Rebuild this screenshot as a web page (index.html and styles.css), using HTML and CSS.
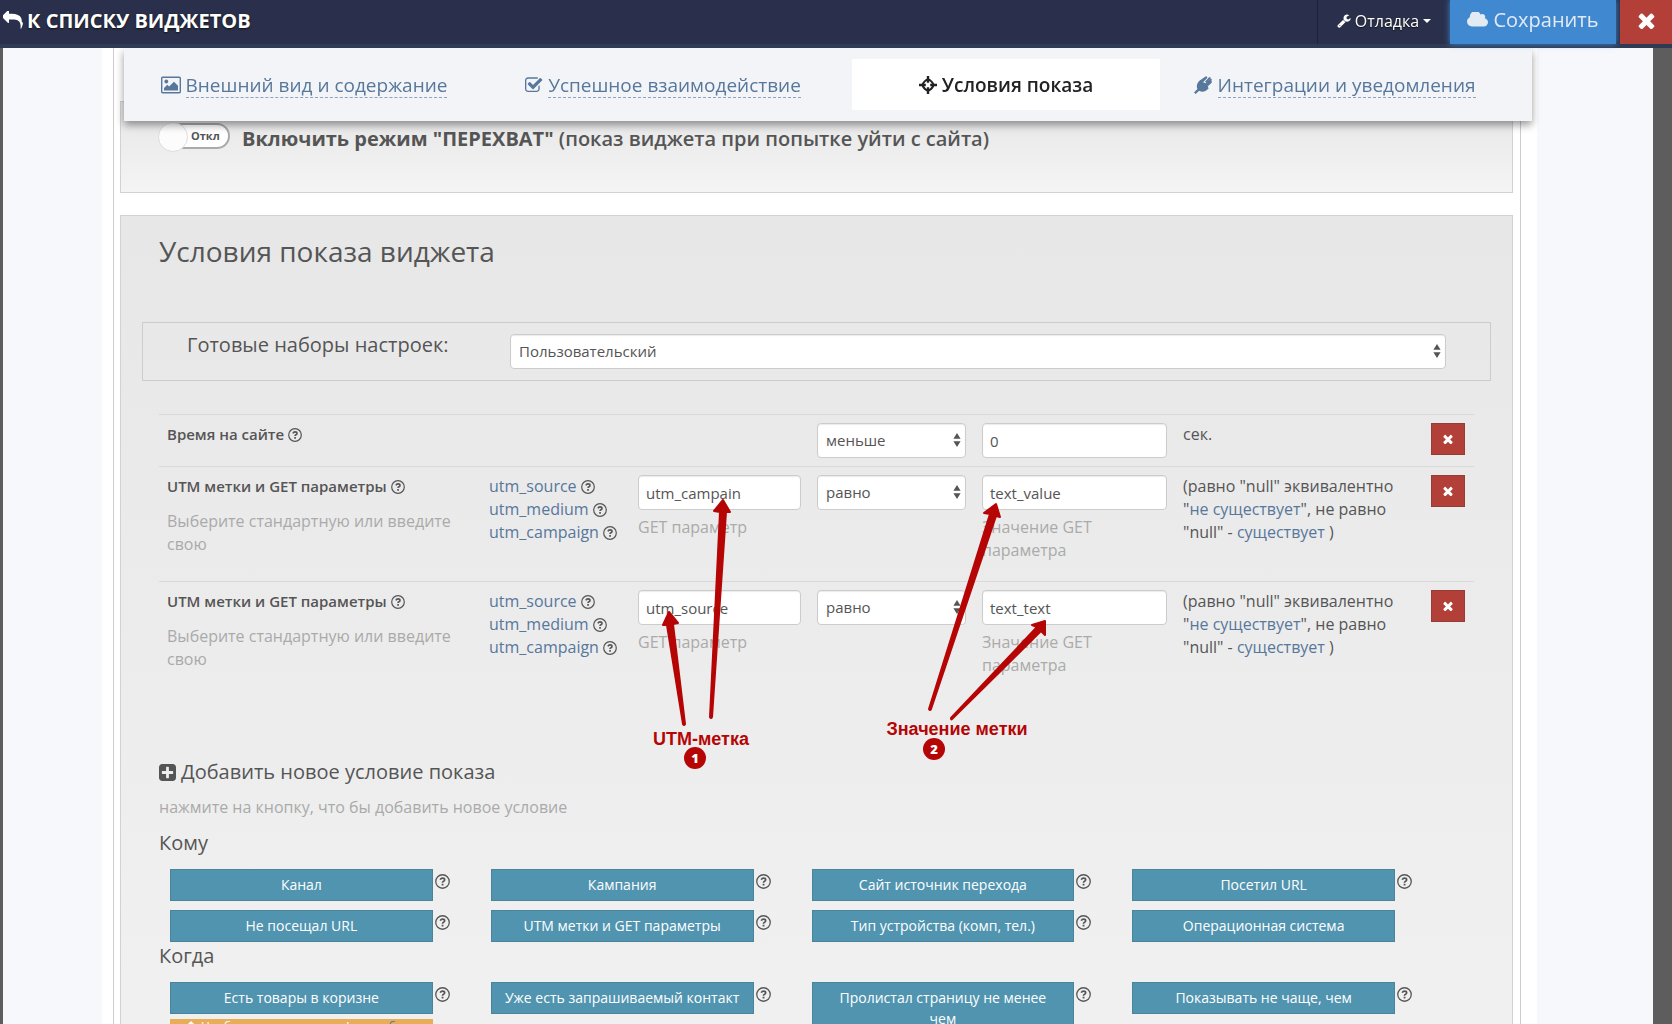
FILE: index.html
```html
<!DOCTYPE html>
<html lang="ru">
<head>
<meta charset="utf-8">
<title>Условия показа виджета</title>
<link rel="stylesheet" href="styles.css">
</head>
<body>
<svg class="sprite" aria-hidden="true">
  <symbol id="i-reply" viewBox="0 96 1792 1664"><path d="M1792 1120q0 166-127 451-3 7-10.500 24t-13.500 30-13 22q-12 17-28 17-15 0-23.500-10t-8.500-25q0-9 2.500-26.500t2.500-23.500q5-68 5-123 0-112-19.500-200.500t-54-153.500-89-112-119.500-78.500-152-46.500-177-20.500-204-5.500h-224v256q0 26-19 45t-45 19-45-19l-512-512q-19-19-19-45t19-45l512-512q19-19 45-19t45 19 19 45v256h224q713 0 875 403 53 134 53 333z"/></symbol>
  <symbol id="i-times" viewBox="256 256 1280 1280"><path d="M1490 1322q0 40-28 68l-136 136q-28 28-68 28t-68-28l-294-294-294 294q-28 28-68 28t-68-28l-136-136q-28-28-28-68t28-68l294-294-294-294q-28-28-28-68t28-68l136-136q28-28 68-28t68 28l294 294 294-294q28-28 68-28t68 28l136 136q28 28 28 68t-28 68l-294 294 294 294q28 28 28 68z"/></symbol>
  <symbol id="i-cloud" viewBox="64 256 1920 1280"><path d="M1984 1152q0 159-112.500 271.500t-271.500 112.500h-1088q-185 0-316.500-131.500t-131.500-316.500q0-132 71-241.500t187-163.500q-2-28-2-43 0-212 150-362t362-150q158 0 286.500 88t187.500 230q70-62 166-62 106 0 181 75t75 181q0 75-41 138 129 30 213 134.500t84 239.500z"/></symbol>
  <symbol id="i-wrench" viewBox="64 64 1664 1728"><path d="M448 1472q0-26-19-45t-45-19-45 19-19 45 19 45 45 19 45-19 19-45zm644-420l-682 682q-37 37-90 37-52 0-91-37l-106-108q-38-36-38-90 0-53 38-91l681-681q39 98 114.500 173.500t173.500 114.500zm634-435q0 39-23 106-47 134-164.500 217.500t-258.500 83.500q-185 0-316.500-131.500t-131.500-316.500 131.500-316.500 316.500-131.500q58 0 121.500 16.500t107.500 46.500q16 11 16 28t-16 28l-293 169v224l193 107q5-3 79-48.500t135.500-81 70.500-35.500q15 0 23.500 10t8.500 25z"/></symbol>
  <symbol id="i-plus" viewBox="128 128 1536 1536"><path d="M1408 960v-128q0-26-19-45t-45-19h-320v-320q0-26-19-45t-45-19h-128q-26 0-45 19t-19 45v320h-320q-26 0-45 19t-19 45v128q0 26 19 45t45 19h320v320q0 26 19 45t45 19h128q26 0 45-19t19-45v-320h320q26 0 45-19t19-45zm256-544v960q0 119-84.500 203.500t-203.500 84.500h-960q-119 0-203.500-84.500t-84.500-203.500v-960q0-119 84.500-203.500t203.500-84.500h960q119 0 203.500 84.500t84.500 203.500z"/></symbol>
  <symbol id="i-check" viewBox="64 64 1728 1600"><path d="M1472 930v318q0 119-84.500 203.500t-203.500 84.500h-832q-119 0-203.500-84.500t-84.500-203.500v-832q0-119 84.500-203.500t203.500-84.500h832q63 0 117 25 15 7 18 23 3 17-9 29l-49 49q-10 10-23 10-3 0-9-2-23-6-45-6h-832q-66 0-113 47t-47 113v832q0 66 47 113t113 47h832q66 0 113-47t47-113v-254q0-13 9-22l64-64q10-10 23-10 6 0 12 3 20 8 20 29zm231-489l-814 814q-24 24-57 24t-57-24l-430-430q-24-24-24-57t24-57l110-110q24-24 57-24t57 24l263 263 647-647q24-24 57-24t57 24l110 110q24 24 24 57t-24 57z"/></symbol>
  <symbol id="i-image" viewBox="0 0 20 17"><path fill="none" stroke="currentColor" stroke-width="1.400" d="M1.700.7h16.600q1 0 1 1v13.600q0 1-1 1H1.700q-1 0-1-1V1.700q0-1 1-1z"/><circle cx="5.300" cy="5" r="1.900"/><path d="M3 14v-2.500l3.300-3.200 1.800 1.800L13 5.200l4 4V14z"/></symbol>
  <symbol id="i-target" viewBox="0 0 18 18"><path d="M9 3.200q3.800 1.500 5.800 5.800-2 4.300-5.800 5.800Q5.200 13.300 3.200 9 5.200 4.700 9 3.200z" fill="none" stroke="currentColor" stroke-width="1.900"/><path d="M7.800 0h2.400v6.800H7.800zM7.800 11.200h2.400V18H7.800zM0 7.800h6.800v2.400H0zM11.200 7.800H18v2.400h-6.800z"/></symbol>
  <symbol id="i-plug" viewBox="0 0 20 20"><path d="M12.200 6.300L16.500 1.700q1-.9 1.800-.1t-.1 1.800L14 7.800zM13.800 9.800l1.700 1.600 4-4q.9-1 .1-1.700t-1.700.1zM5 6.300L7 4.500l9.300 9.200-1.900 1.900q-4 3.200-8.700.9L1.800 20 0 18.200l3.800-3.700Q2 10 5 6.300z"/><path d="M6.500 5L12.400.8q1.200-.9 2 0t-.2 2L10 7l3 1 5-4.500q1-.7 1.600 0t-.2 1.600L15 10l1 3.700-3 .3z"/></symbol>
  <symbol id="i-help" viewBox="0 0 14 14"><circle cx="7" cy="7" r="6.300" fill="none" stroke="currentColor" stroke-width="1.200"/><path d="M4.900 5.400Q5.500 3.900 7 3.900q2 0 2 1.500 0 .9-1 1.400-1 .5-1 1.300" fill="none" stroke="currentColor" stroke-width="1.600"/><path d="M6.200 9.100h1.700v1.600H6.200z"/></symbol>
  <symbol id="i-sort" viewBox="0 0 8 14"><path d="M4 0l3.600 5.700H.4zM4 14l3.600-5.700H.4z"/></symbol>
  <symbol id="i-up" viewBox="0 0 12 12"><path d="M6 0l6 6-1 1H8v5H4V7H1L0 6z"/></symbol>
</svg>

<header class="topbar">
  <a class="back" href="#"><svg class="icon icon-reply"><use href="#i-reply"/></svg>К СПИСКУ ВИДЖЕТОВ</a>
  <button class="debug" type="button"><svg class="icon icon-wrench"><use href="#i-wrench"/></svg>Отладка<span class="caret"></span></button>
  <button class="save" type="button"><svg class="icon icon-cloud"><use href="#i-cloud"/></svg>Сохранить</button>
  <button class="close" type="button" aria-label="Закрыть"><svg class="icon icon-close"><use href="#i-times"/></svg></button>
</header>

<main class="modal">
  <div class="sheet">
    <div class="frame">
      <nav class="tabs">
        <a class="tab" href="#"><svg class="icon icon-tab"><use href="#i-image"/></svg><span class="tab-text">Внешний вид и содержание</span></a>
        <a class="tab" href="#"><svg class="icon icon-tab-small"><use href="#i-check"/></svg><span class="tab-text">Успешное взаимодействие</span></a>
        <a class="tab tab-active" href="#"><svg class="icon icon-tab-small"><use href="#i-target"/></svg><span class="tab-text">Условия показа</span></a>
        <a class="tab" href="#"><svg class="icon icon-tab"><use href="#i-plug"/></svg><span class="tab-text">Интеграции и уведомления</span></a>
      </nav>

      <section class="panel panel-capture">
        <label class="capture"><input class="switch-input" type="checkbox"><span class="switch">Откл</span><span class="capture-text"><strong>Включить режим "ПЕРЕХВАТ"</strong> (показ виджета при попытке уйти с сайта)</span></label>
      </section>

      <section class="panel panel-rules">
        <h2 class="title">Условия показа виджета</h2>
        <div class="preset">
          <label class="preset-label" for="preset">Готовые наборы настроек:</label>
          <div class="select"><select class="control" id="preset"><option>Пользовательский</option></select><svg class="sort"><use href="#i-sort"/></svg></div>
        </div>

        <div class="rules">
          <table class="rules-table">
            <colgroup><col><col class="col-links"><col class="col-param"><col class="col-op"><col class="col-value"><col class="col-note"><col class="col-delete"></colgroup>
            <tr>
              <td><span class="rule-name">Время на сайте</span> <svg class="help"><use href="#i-help"/></svg></td>
              <td></td>
              <td></td>
              <td><div class="select"><select class="control" aria-label="Сравнение"><option>меньше</option></select><svg class="sort"><use href="#i-sort"/></svg></div></td>
              <td><input class="control" type="text" value="0" aria-label="Секунды"></td>
              <td>сек.</td>
              <td><button class="delete" type="button" aria-label="Удалить"><svg class="icon icon-delete"><use href="#i-times"/></svg></button></td>
            </tr>
            <tr>
              <td><span class="rule-name">UTM метки и GET параметры</span> <svg class="help"><use href="#i-help"/></svg><p class="rule-hint">Выберите стандартную или введите свою</p></td>
              <td class="links"><a href="#">utm_source</a> <svg class="help"><use href="#i-help"/></svg><br><a href="#">utm_medium</a> <svg class="help"><use href="#i-help"/></svg><br><a href="#">utm_campaign</a> <svg class="help"><use href="#i-help"/></svg></td>
              <td><input class="control" id="p1" type="text" value="utm_campain"><label class="field-hint" for="p1">GET параметр</label></td>
              <td><div class="select"><select class="control" aria-label="Сравнение"><option>равно</option></select><svg class="sort"><use href="#i-sort"/></svg></div></td>
              <td><input class="control" id="v1" type="text" value="text_value"><label class="field-hint" for="v1">Значение GET параметра</label></td>
              <td>(равно "null" эквивалентно "<a href="#">не существует</a>", не равно "null" - <a href="#">существует</a> )</td>
              <td><button class="delete" type="button" aria-label="Удалить"><svg class="icon icon-delete"><use href="#i-times"/></svg></button></td>
            </tr>
            <tr>
              <td><span class="rule-name">UTM метки и GET параметры</span> <svg class="help"><use href="#i-help"/></svg><p class="rule-hint">Выберите стандартную или введите свою</p></td>
              <td class="links"><a href="#">utm_source</a> <svg class="help"><use href="#i-help"/></svg><br><a href="#">utm_medium</a> <svg class="help"><use href="#i-help"/></svg><br><a href="#">utm_campaign</a> <svg class="help"><use href="#i-help"/></svg></td>
              <td><input class="control" id="p2" type="text" value="utm_source"><label class="field-hint" for="p2">GET параметр</label></td>
              <td><div class="select"><select class="control" aria-label="Сравнение"><option>равно</option></select><svg class="sort"><use href="#i-sort"/></svg></div></td>
              <td><input class="control" id="v2" type="text" value="text_text"><label class="field-hint" for="v2">Значение GET параметра</label></td>
              <td>(равно "null" эквивалентно "<a href="#">не существует</a>", не равно "null" - <a href="#">существует</a> )</td>
              <td><button class="delete" type="button" aria-label="Удалить"><svg class="icon icon-delete"><use href="#i-times"/></svg></button></td>
            </tr>
          </table>

          <svg class="notes" viewBox="640 490 420 285">
            <g class="arrow">
              <path d="M669 612L678 623 673 624 685 724Q684 726 683 724L667 625 663 625z"/>
              <path d="M723 500L730 512 726 512 712 717Q711 719 710 717L720 512 714 511z"/>
              <path d="M996 504L1000 517 996 516 931 709Q930 711 929 709L990 514 984 513z"/>
              <path d="M1045 621L1045 635 1041 631 952 719Q951 720 951 718L1037 627 1032 625z"/>
            </g>
            <text class="note-text" x="701" y="745">UTM-метка</text>
            <text class="note-text" x="957" y="735">Значение метки</text>
            <circle cx="695" cy="758" r="11"/>
            <circle cx="934" cy="749" r="11"/>
            <text class="note-number" x="695" y="763">1</text>
            <text class="note-number" x="934" y="754">2</text>
          </svg>
        </div>

        <h3 class="subtitle add-title"><svg class="icon icon-plus"><use href="#i-plus"/></svg>Добавить новое условие показа</h3>
        <p class="add-hint">нажмите на кнопку, что бы добавить новое условие</p>

        <h3 class="subtitle">Кому</h3>
        <div class="choices">
          <div class="choice"><button class="add" type="button">Канал</button><svg class="help"><use href="#i-help"/></svg></div>
          <div class="choice"><button class="add" type="button">Кампания</button><svg class="help"><use href="#i-help"/></svg></div>
          <div class="choice"><button class="add" type="button">Сайт источник перехода</button><svg class="help"><use href="#i-help"/></svg></div>
          <div class="choice"><button class="add" type="button">Посетил URL</button><svg class="help"><use href="#i-help"/></svg></div>
          <div class="choice"><button class="add" type="button">Не посещал URL</button><svg class="help"><use href="#i-help"/></svg></div>
          <div class="choice"><button class="add" type="button">UTM метки и GET параметры</button><svg class="help"><use href="#i-help"/></svg></div>
          <div class="choice"><button class="add" type="button">Тип устройства (комп, тел.)</button><svg class="help"><use href="#i-help"/></svg></div>
          <div class="choice"><button class="add" type="button">Операционная система</button></div>
        </div>

        <h3 class="subtitle">Когда</h3>
        <div class="choices">
          <div class="choice"><button class="add" type="button">Есть товары в коризне</button><svg class="help"><use href="#i-help"/></svg><p class="warning"><svg class="icon icon-up"><use href="#i-up"/></svg>Необходима интеграция! <a href="#">подробнее</a></p></div>
          <div class="choice"><button class="add" type="button">Уже есть запрашиваемый контакт</button><svg class="help"><use href="#i-help"/></svg></div>
          <div class="choice"><button class="add" type="button">Пролистал страницу не менее<br>чем</button><svg class="help"><use href="#i-help"/></svg></div>
          <div class="choice"><button class="add" type="button">Показывать не чаще, чем</button><svg class="help"><use href="#i-help"/></svg></div>
        </div>
      </section>
    </div>
  </div>
</main>
</body>
</html>
```
FILE: styles.css
```css
* {
  box-sizing: border-box;
}

body {
  display: flex;
  flex-direction: column;
  height: 100vh;
  margin: 0;
  overflow: hidden;
  background: #5d5d5d;
  color: #555;
  font: 16px/23px "Open Sans", "Noto Sans", sans-serif;
}

a {
  color: #57779b;
  text-decoration: none;
}

button,
input,
select {
  font-family: inherit;
}

strong {
  font-weight: 700;
}

.sprite {
  position: absolute;
  width: 0;
  height: 0;
}

.icon,
.help,
.sort {
  fill: currentColor;
  flex: none;
}

/* Top bar */
.topbar {
  display: flex;
  flex: none;
  height: 48px;
  background: #2a304b;
  border-bottom: 4px solid #2f3b54;
  position: relative;
  z-index: 3;
}

.back {
  display: flex;
  align-items: center;
  gap: 4px;
  margin-right: auto;
  padding: 0 0 4px 3px;
  color: #fff;
  font-size: 20px;
  font-weight: 700;
  text-shadow: 0 1px 2px #111;
}

.icon-reply {
  width: 20px;
  height: 19px;
}

.debug,
.save,
.close {
  display: flex;
  align-items: center;
  justify-content: center;
  border: 0;
  color: #fff;
}

.debug {
  gap: 4px;
  width: 133px;
  padding: 0 0 3px;
  background: none;
  border-left: 1px solid #1d2237;
  font-size: 16px;
  text-shadow: 0 1px 1px #111;
}

.icon-wrench {
  width: 14px;
  height: 14px;
}

.caret {
  border: 4px solid transparent;
  border-top-color: #fff;
  border-bottom: 0;
}

.save {
  gap: 5px;
  width: 166px;
  margin-right: 4px;
  padding: 0 0 6px;
  background: #4088d0;
  color: #e2eaf4;
  font-size: 20px;
  box-shadow: 0 0 6px #3d86d2;
}

.icon-cloud {
  width: 21px;
  height: 15px;
}

.close {
  width: 52px;
  padding: 0 0 4px;
  background: #b24038;
}

.icon-close {
  width: 17px;
  height: 17px;
}

/* Page sheet */
.modal {
  flex: 1;
  min-height: 0;
  margin: 0 19px 0 3px;
  overflow: hidden;
  background: #f6f8fb;
}

.sheet {
  margin: 0 116px 0 99px;
  padding: 0 16px 0 11px;
  background: #fff;
}

.frame {
  padding: 0 7px 0 6px;
  border: solid #ccc;
  border-width: 0 1px;
}

/* Tabs */
.tabs {
  position: sticky;
  top: 0;
  z-index: 2;
  display: grid;
  grid-template-columns: 360fr 358fr 328fr 328fr;
  height: 73px;
  margin: 0 -19px 0 4px;
  padding: 11px 34px 11px 0;
  background: #f2f4f7;
  box-shadow: 0 4px 8px rgba(0, 0, 0, 0.4);
}

.tab {
  display: flex;
  align-items: center;
  justify-content: center;
  gap: 5px;
  margin: 0 10px;
}

.tab-text {
  padding-top: 2px;
  border-bottom: 1px dashed #8fa3bb;
  font-size: 19px;
  line-height: 24px;
}

.tab-active {
  background: #fff;
  color: #222;
}

.tab-active .tab-text {
  border-color: transparent;
  font-weight: 600;
}

.icon-tab {
  width: 20px;
  height: 18px;
}

.icon-tab-small {
  width: 18px;
  height: 18px;
}

/* Panels */
.panel {
  padding: 17px 38px;
  border: 1px solid #d2d2d2;
}

.panel-capture {
  height: 92px;
  margin-top: -20px;
  background: linear-gradient(#e6e6e6, #f4f4f4);
}

.capture {
  display: flex;
  align-items: flex-start;
  gap: 12px;
  padding-top: 4px;
}

.capture-text {
  font-size: 20px;
  font-weight: 600;
  line-height: 32px;
}

.switch-input {
  position: absolute;
  opacity: 0;
}

.switch {
  position: relative;
  width: 71px;
  height: 26px;
  padding-left: 30px;
  border: 2px solid #aaa;
  border-radius: 13px;
  background: #fff;
  font-size: 11px;
  font-weight: 700;
  line-height: 22px;
}

.switch::before {
  position: absolute;
  top: -3px;
  left: -3px;
  width: 28px;
  height: 28px;
  border: 1px solid #ddd;
  border-radius: 50%;
  background: #fcfcfc;
  content: "";
}

.panel-rules {
  margin-top: 22px;
  background: linear-gradient(#e7e7e7, #f0f0f0 760px);
}

.title {
  margin: 0 0 53px;
  font-size: 28px;
  font-weight: 400;
  line-height: 36px;
}

.preset {
  display: grid;
  grid-template-columns: 323px 1fr;
  margin: 0 -17px 33px;
  padding: 11px 44px;
  border: 1px solid #ccc;
}

.preset-label {
  font-size: 20px;
  line-height: 21px;
}

.select {
  position: relative;
}

.sort {
  position: absolute;
  top: 10px;
  right: 5px;
  width: 8px;
  height: 14px;
  pointer-events: none;
}

.control {
  display: block;
  width: 100%;
  height: 35px;
  padding: 0 7px;
  border: 1px solid #ccc;
  border-radius: 4px;
  background: #fff;
  box-shadow: inset 0 1px 1px rgba(0, 0, 0, 0.08);
  color: #555;
  font-size: 15px;
  appearance: none;
}

select.control {
  padding: 0 8px 2px;
}

/* Rules */
.rules {
  position: relative;
}

.rules-table {
  width: 100%;
  border-collapse: collapse;
  table-layout: fixed;
}

.col-links { width: 149px; }
.col-param { width: 179px; }
.col-op { width: 165px; }
.col-value { width: 201px; }
.col-note { width: 248px; }
.col-delete { width: 51px; }

.rules-table td {
  padding: 8px;
  border-top: 1px solid #d9d9d9;
  vertical-align: top;
}

.links {
  white-space: nowrap;
}

.rule-name {
  font-size: 15px;
  font-weight: 600;
}

.rule-hint {
  margin: 12px 0 0;
  color: #aaa;
}

.field-hint {
  display: block;
  margin: 6px 0 11px;
  color: #aaa;
}

.help {
  width: 14px;
  height: 14px;
  vertical-align: -2px;
}

.delete {
  display: grid;
  place-items: center;
  width: 34px;
  height: 32px;
  padding: 0;
  border: 1px solid #943c37;
  background: #b24038;
  color: #fff;
}

.icon-delete {
  width: 10px;
  height: 10px;
}

/* Hand-drawn notes lie over the table */
.notes {
  position: absolute;
  top: 76px;
  right: 414px;
  width: 420px;
  height: 285px;
  fill: #b50505;
  pointer-events: none;
}

.arrow {
  stroke: #b50505;
  stroke-linejoin: round;
  stroke-width: 2px;
}

.note-text {
  font: 700 18px "Liberation Sans", Arial, sans-serif;
  text-anchor: middle;
}

.note-number {
  fill: #fff;
  font: 800 13px "Open Sans", sans-serif;
  text-anchor: middle;
}

/* New rule buttons */
.subtitle {
  margin: 0 0 12px;
  font-size: 20px;
  font-weight: 400;
  line-height: 28px;
}

.add-title {
  display: flex;
  align-items: center;
  gap: 5px;
  margin: 62px 0 10px;
}

.icon-plus {
  width: 17px;
  height: 17px;
}

.add-hint {
  margin: 0 0 10px;
  color: #aaa;
}

.choices {
  display: grid;
  grid-template-columns: repeat(4, 1fr);
  row-gap: 9px;
  padding-right: 32px;
}

.choice {
  display: grid;
  grid-template-columns: 1fr 15px;
  align-items: start;
  gap: 5px 2px;
  padding: 0 30px 0 11px;
}

.choice .help {
  width: 15px;
  height: 15px;
  margin-top: 5px;
}

.add {
  min-height: 32px;
  padding: 4px 8px 5px;
  border: 1px solid #4a849b;
  background: #5194b0;
  color: #fff;
  font-size: 14px;
  line-height: 21px;
}

.warning {
  margin: 0;
  background: #e9ad58;
  color: #fff;
  font-size: 12px;
  line-height: 16px;
  text-align: center;
}

.icon-up {
  width: 10px;
  height: 10px;
  margin-right: 5px;
}
```
